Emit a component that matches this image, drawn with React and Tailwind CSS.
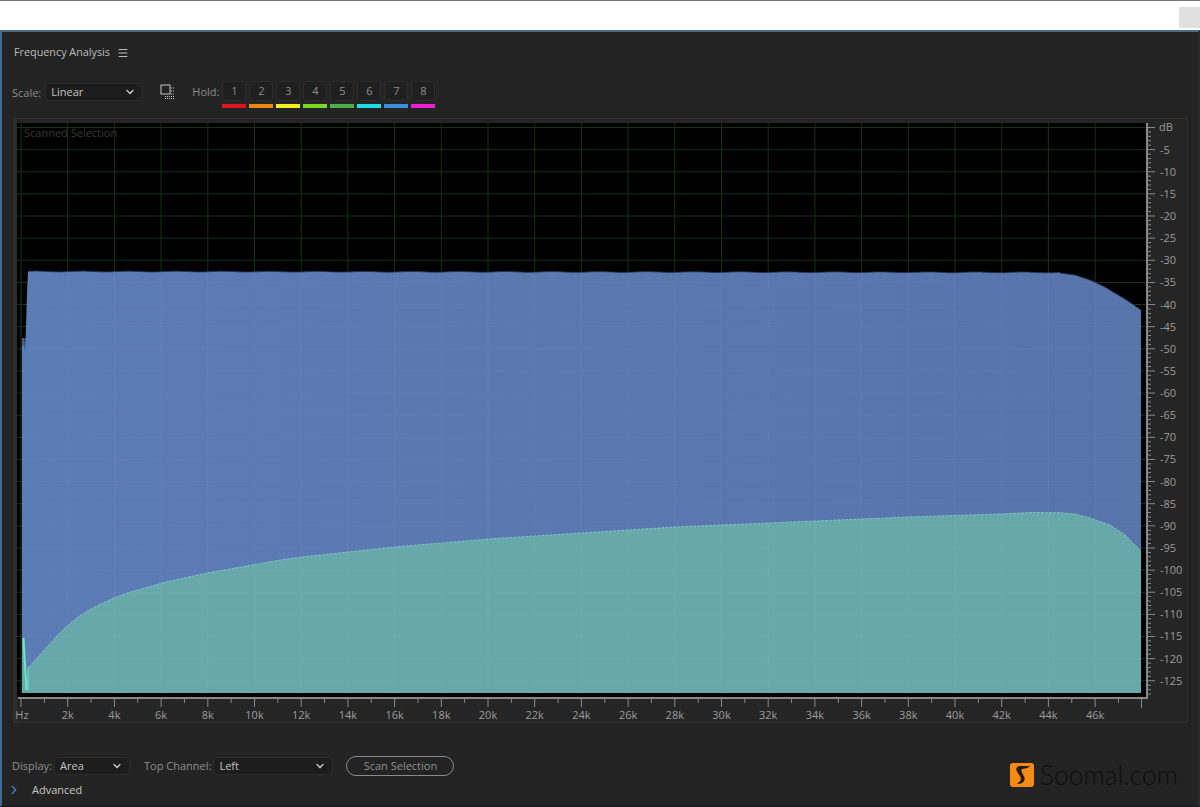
import React from "react";
import { ChevronDown, ChevronRight, Menu } from "lucide-react";

const font = { fontFamily: "'Open Sans', 'Noto Sans', sans-serif" };

const X0 = 21;
const PX_PER_K = 23.35;
const Y0 = 127.5;
const PX_PER_5DB = 22.13;

const kHz = Array.from({ length: 24 }, (_, i) => i * 2);
const dbs = Array.from({ length: 25 }, (_, i) => (i + 1) * 5);
const holds = [
  ["1", "bg-[#e0141c]"],
  ["2", "bg-[#ee8612]"],
  ["3", "bg-[#f4f01e]"],
  ["4", "bg-[#7bd81e]"],
  ["5", "bg-[#4caf46]"],
  ["6", "bg-[#1cdce8]"],
  ["7", "bg-[#3a8ede]"],
  ["8", "bg-[#ee1ed2]"],
];

// top edge of the spectrum has a small ripple
const ripple = Array.from({ length: 130 }, (_, i) => {
  const x = 28 + i * 8;
  return `${x},${(271.4 + (x / 1040) * 1 + 0.4 * Math.sin((x * 2 * Math.PI) / 47)).toFixed(1)}`;
}).join(" ");
const blueTop = `28,271 ${ripple} 1060,273 1075,275 1090,280 1105,287 1113,292 1125,299 1141,310`;
const blue = `22,693 22,338 24,338 25,352 26,327 27,293 ${blueTop} 1141,693`;

const tealTop =
  "29,667 37,658 47,647 56,637 67,626 78,617 89,610 101,604 114,598 127,593 141,589 162,583 184,578 207,573 241,567 274,561 302,557 348,552 395,547 442,543 488,539 535,536 582,533 628,530 675,527 722,525 768,523 815,521 861,519 908,517 955,515.5 1001,514 1030,512.5 1060,512.7 1075,514 1090,518 1110,525 1125,535 1141,551";
const teal = `22,693 22,638 24,638 26.5,690 28,667 ${tealTop} 1141,693`;

function Select({ value, className }) {
  return (
    <div className={`flex h-[18px] items-center justify-between rounded-sm border border-[#2c2c2c] bg-[#1d1d1d] pl-[5px] pr-1.5 text-[#c4c4c4] ${className}`}>
      <span>{value}</span>
      <ChevronDown className="h-3 w-3 text-[#d0d0d0]" strokeWidth={2.5} />
    </div>
  );
}

function Chart() {
  return (
    <svg viewBox="13 118 1175 605" className="block h-[605px] w-[1175px]" style={font}>
      <defs>
        <linearGradient id="blueFill" x1="0" x2="1" y1="0" y2="0">
          <stop offset="0" stopColor="#5c7cb6" />
          <stop offset="1" stopColor="#5875aa" />
        </linearGradient>
      </defs>
      <rect x="13.5" y="118.5" width="1174" height="604" fill="#252525" stroke="#2f2f2f" />
      <rect x="14" y="119" width="3" height="603" fill="#2e2c2a" />
      <rect x="17" y="123" width="1129" height="574" fill="#000" />

      {kHz.map(k => (
        <line key={k} x1={X0 + k * PX_PER_K} x2={X0 + k * PX_PER_K} y1="123" y2="693" stroke="#173018" />
      ))}
      <line x1="17" x2="1146" y1={Y0} y2={Y0} stroke="#173018" />
      {dbs.map(d => (
        <line key={d} x1="17" x2="1146" y1={Y0 + (d / 5) * PX_PER_5DB} y2={Y0 + (d / 5) * PX_PER_5DB} stroke="#173018" />
      ))}

      <polygon points={blue} fill="url(#blueFill)" />
      <polyline points={blueTop} fill="none" stroke="#1f3358" strokeWidth="0.8" />
      <rect x="22" y="338" width="2" height="8" fill="#5a5f66" />
      <path d="M25 338V352" stroke="#3f78e0" strokeWidth="1" />
      <polygon points={teal} fill="#67a9aa" />
      <polyline points={tealTop} fill="none" stroke="#8fd0d0" strokeWidth="0.7" strokeDasharray="3 1" />
      <path d="M23.5 638L26.5 690" stroke="#6fe4c6" strokeWidth="2" />
      <path d="M28 667V690" stroke="#6fe4c6" strokeWidth="1" />

      {/* grid shows faintly through the fill */}
      {kHz.map(k => (
        <line key={k} x1={X0 + k * PX_PER_K} x2={X0 + k * PX_PER_K} y1="272" y2="693" stroke="#fff" strokeOpacity="0.035" />
      ))}
      {dbs.map(d => (
        <line key={d} x1="22" x2="1141" y1={Y0 + (d / 5) * PX_PER_5DB} y2={Y0 + (d / 5) * PX_PER_5DB} stroke="#fff" strokeOpacity={d > 30 ? 0.03 : 0} />
      ))}
      <text x="24" y="137" fontSize="11" fill="#3a3a3a">Scanned Selection</text>

      {/* bottom ruler */}
      <line x1="18" x2="1148" y1="698" y2="698" stroke="#8a8a8a" strokeWidth="2" />
      {Array.from({ length: 48 }, (_, i) => (
        <line key={i} x1={X0 + i * PX_PER_K} x2={X0 + i * PX_PER_K} y1="698" y2={i % 2 ? 703 : 707} stroke="#8a8a8a" />
      ))}
      <line x1="1141.5" x2="1141.5" y1="698" y2="708" stroke="#8a8a8a" />
      {kHz.map(k => (
        <text key={k} x={k === 0 ? 22 : X0 + k * PX_PER_K} y="719" fontSize="11" fill="#9c9c9c" textAnchor="middle">
          {k === 0 ? "Hz" : `${k}k`}
        </text>
      ))}

      {/* right ruler */}
      <line x1="1147" x2="1147" y1="123" y2="698" stroke="#8a8a8a" strokeWidth="2" />
      {Array.from({ length: 130 }, (_, i) => i).filter(i => Y0 + i * (PX_PER_5DB / 5) < 697).map(i => (
        <line key={i} x1="1146" x2={i % 5 === 0 ? 1155 : 1151} y1={Y0 + i * (PX_PER_5DB / 5)} y2={Y0 + i * (PX_PER_5DB / 5)} stroke="#8a8a8a" />
      ))}
      <text x="1159" y="131" fontSize="11" fill="#9c9c9c">dB</text>
      {dbs.map(d => (
        <text key={d} x="1160" y={Y0 + (d / 5) * PX_PER_5DB + 4} fontSize="11" fill="#9c9c9c">
          {`-${d}`}
        </text>
      ))}
    </svg>
  );
}

export default function App() {
  return (
    <div className="flex h-[807px] w-[1200px] flex-col overflow-hidden bg-white text-[11px]" style={font}>
      <div className="flex h-[30px] items-start justify-end border-t border-[#777]">
        <div className="mt-[6px] h-[21px] w-[21px] bg-[#e0e0e0]" />
      </div>
      <div className="flex flex-1 flex-col border-t-2 border-r-2 border-b-2 border-l-2 border-t-[#4a6a88] border-r-[#2b2b2b] border-b-[#191c20] border-l-[#3f6a98] bg-[#232323]">
        <div className="flex h-[41px] items-center gap-[7px] pl-3 text-[10.8px] text-[#bdbdbd]">
          <span>Frequency Analysis</span>
          <Menu className="h-3 w-3" />
        </div>
        <div className="flex h-[45px] items-start pl-[10px] pt-[8px] text-[#8e8e8e]">
          <span className="mr-[4px] mt-[2px] leading-[19px]">Scale:</span>
          <Select value="Linear" className="mt-[2px] w-[98px]" />
          <svg viewBox="0 0 16 16" className="ml-[17px] mt-[3px] h-4 w-4 text-[#c8c8c8]" fill="none" stroke="currentColor">
            <rect x="1" y="1" width="9" height="9" />
            <path d="M11 4h4M11 7h4M11 10h4M5 12.5h10M5 14.5h10" strokeDasharray="1 1" />
          </svg>
          <span className="ml-[16px] mr-[3px] mt-[1px] leading-[19px]">Hold:</span>
          <div className="flex gap-[3px]">
            {holds.map(([n, color]) => (
              <div key={n} className="w-6">
                <div className="flex h-5 items-center justify-center rounded-sm border border-[#2c2c2c] bg-[#1f1f1f] text-[#8e8e8e]">{n}</div>
                <div className={`mt-[3px] h-1 ${color}`} />
              </div>
            ))}
          </div>
        </div>
        <div className="pl-[11px]">
          <Chart />
        </div>
        <div className="mt-[33px] flex h-[20px] items-center pl-[10px] text-[#8e8e8e]">
          <span className="mr-[2px]">Display:</span>
          <Select value="Area" className="w-[76px]" />
          <span className="ml-[14px] mr-[2px]">Top Channel:</span>
          <Select value="Left" className="w-[120px]" />
          <div className="ml-[13px] flex h-[20px] w-[108px] items-center justify-center rounded-full border border-[#8a8a8a]">Scan Selection</div>
          <div className="ml-auto mr-[20px] flex translate-y-[9px] items-center gap-[6px]">
            <svg viewBox="0 0 24 24" className="h-6 w-6">
              <rect width="24" height="24" rx="3" fill="#f58a14" />
              <path d="M20 3H10C6.5 3 5.5 6 7 8.5L10.5 14C11.5 16.5 10.5 19 7 20.5C11 21.5 15.5 19 14.5 14.5L11.5 8.5C10.8 6.5 12.5 5.5 15 5.5C17 5.5 18.5 4.5 20 3Z" fill="#241a10" />
            </svg>
            <span className="text-[26.5px] font-light leading-none text-[#0f0f0f]" style={{ fontFamily: "Lato, sans-serif" }}>Soomal.com</span>
          </div>
        </div>
        <div className="mt-[6px] flex items-center text-[#c8c8c8]">
          <ChevronRight className="ml-[5px] h-3.5 w-3.5 text-[#3a80c8]" strokeWidth={2.5} />
          <span className="ml-[11px]">Advanced</span>
        </div>
      </div>
    </div>
  );
}
